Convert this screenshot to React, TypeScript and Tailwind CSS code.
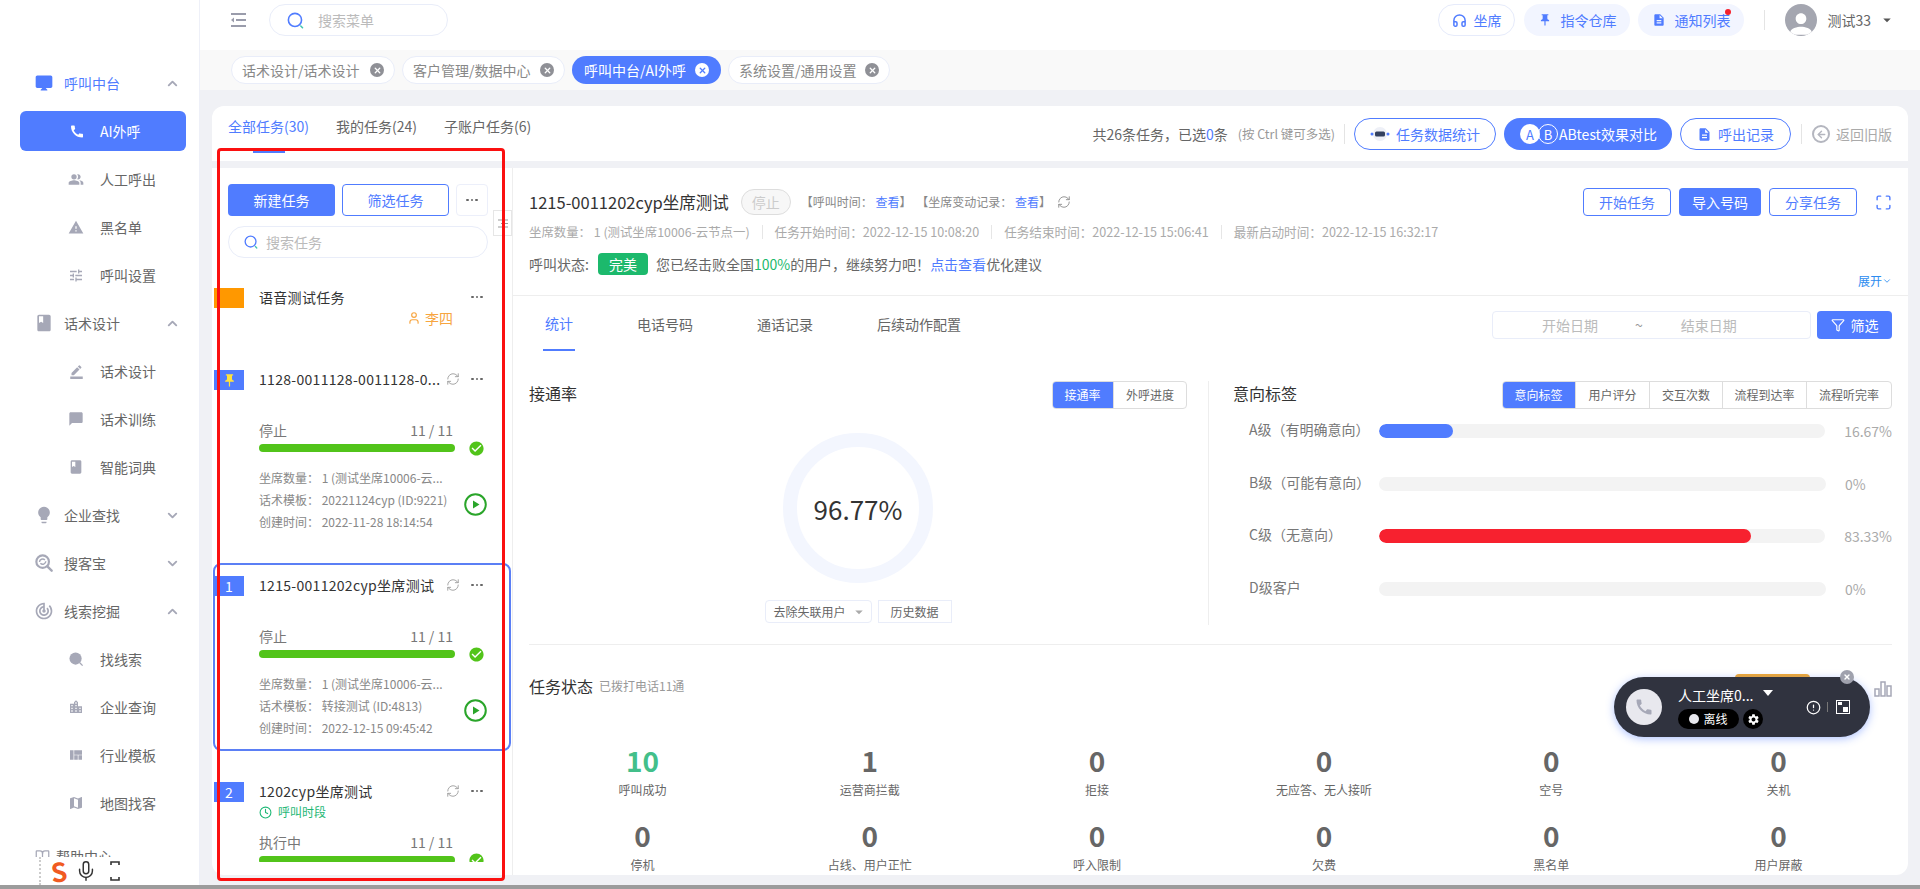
import {
  BookOpen,
  ChevronDown,
  ChevronUp,
  Clock,
  Filter,
  Headphones,
  Mic,
  RefreshCw,
  User,
  X,
  AlertCircle,
  Maximize,
  ArrowLeft,
} from "lucide-react";
import type { ReactNode } from "react";
import {
  MdBook,
  MdBorderColor,
  MdCall,
  MdChatBubble,
  MdCheckCircle,
  MdDesktopMac,
  MdDescription,
  MdLightbulb,
  MdLocationCity,
  MdMap,
  MdPeopleAlt,
  MdPushPin,
  MdSettings,
  MdTrackChanges,
  MdTune,
  MdViewQuilt,
  MdWarning,
  MdPerson,
  MdArrowDropDown,
} from "react-icons/md";

type NavRow = {
  label: string;
  icon: ReactNode;
  sub?: boolean;
  open?: boolean;
  active?: boolean;
  blue?: boolean;
};

function SolidSearch({ size }: { size: number }) {
  return (
    <svg width={size} height={size} viewBox="0 0 16 16" fill="currentColor">
      <circle cx="7" cy="7" r="6.5" />
      <path d="M12 11l3 3-1 1-3-3z" />
    </svg>
  );
}

function RoundSearch({ size }: { size: number }) {
  return (
    <svg width={size} height={size} viewBox="0 0 20 20" fill="none" stroke="currentColor">
      <circle cx="8.5" cy="8.5" r="7" strokeWidth="2.4" />
      <path d="M14 14l4.5 4.5" strokeWidth="2.6" strokeLinecap="round" />
      <path d="M5 9a3.5 3.5 0 0 1 6-2.4M12 8a3.5 3.5 0 0 1-6 2.4" strokeWidth="1.6" />
    </svg>
  );
}

const navRows: NavRow[] = [
  { label: "呼叫中台", icon: <MdDesktopMac size={20} />, open: true, blue: true },
  { label: "AI外呼", icon: <MdCall size={17} />, sub: true, active: true },
  { label: "人工呼出", icon: <MdPeopleAlt size={17} />, sub: true },
  { label: "黑名单", icon: <MdWarning size={17} />, sub: true },
  { label: "呼叫设置", icon: <MdTune size={17} />, sub: true },
  { label: "话术设计", icon: <MdBook size={20} />, open: true },
  { label: "话术设计", icon: <MdBorderColor size={15} />, sub: true },
  { label: "话术训练", icon: <MdChatBubble size={16} />, sub: true },
  { label: "智能词典", icon: <MdBook size={16} />, sub: true },
  { label: "企业查找", icon: <MdLightbulb size={22} />, open: false },
  { label: "搜客宝", icon: <RoundSearch size={18} />, open: false },
  { label: "线索挖掘", icon: <MdTrackChanges size={20} />, open: true },
  { label: "找线索", icon: <SolidSearch size={15} />, sub: true },
  { label: "企业查询", icon: <MdLocationCity size={16} />, sub: true },
  { label: "行业模板", icon: <MdViewQuilt size={16} />, sub: true },
  { label: "地图找客", icon: <MdMap size={16} />, sub: true },
];

function Sidebar() {
  return (
    <aside className="w-[200px] h-full shrink-0 bg-white pt-[59px] overflow-hidden border-r border-[#eef0f8]">
      {navRows.map((r, i) => (
        <div key={i} className="h-12 flex items-center">
          {r.active ? (
            <div className="ml-5 w-[166px] h-10 rounded-md bg-[#507cff] text-white flex items-center text-sm">
              <span className="ml-[49px] w-4 flex justify-center">{r.icon}</span>
              <span className="ml-[15px]">{r.label}</span>
            </div>
          ) : r.sub ? (
            <div className="flex items-center text-sm text-[#666666]">
              <span className="ml-[68px] w-4 flex justify-center text-[#a6a8b7]">{r.icon}</span>
              <span className="ml-4">{r.label}</span>
            </div>
          ) : (
            <div className={r.blue ? "flex items-center text-sm text-[#507cff] w-full" : "flex items-center text-sm text-[#666666] w-full"}>
              <span className={r.blue ? "ml-[34px] w-5 flex justify-center text-[#507cff]" : "ml-[34px] w-5 flex justify-center text-[#a6a8b7]"}>
                {r.icon}
              </span>
              <span className="ml-2.5">{r.label}</span>
              <span className="ml-auto mr-[19px] text-[#a6a8b7]">
                {r.open ? <ChevronUp size={15} strokeWidth={3} /> : <ChevronDown size={15} strokeWidth={3} />}
              </span>
            </div>
          )}
        </div>
      ))}
      <div className="flex items-center h-12 pt-2.5 text-sm text-[#666666]">
        <BookOpen size={15} className="ml-[35px] text-[#a6a8b7]" />
        <span className="ml-1.5">帮助中心</span>
      </div>
    </aside>
  );
}

function SearchGlyph({ size }: { size: number }) {
  return (
    <svg width={size} height={size} viewBox="0 0 16 16" fill="none" className="shrink-0">
      <circle cx="7.5" cy="7.5" r="6.2" stroke="#507cff" strokeWidth="1.5" />
      <path d="M13 13.2l1.6 1.6" stroke="#46c6b0" strokeWidth="1.5" strokeLinecap="round" />
    </svg>
  );
}

function Header() {
  return (
    <header className="h-[50px] shrink-0 bg-white flex items-start pt-1">
      <svg width="16" height="14" viewBox="0 0 16 14" fill="none" className="ml-[30px] mt-[9px]">
        <path d="M1 1h15M6 7h10M1 13h15" stroke="#9a9cab" strokeWidth="1.8" />
        <path d="M4 4.5L1 7l3 2.5z" fill="#9a9cab" />
      </svg>
      <div className="ml-[23px] w-[179px] h-8 rounded-full border border-[#e9edf9] flex items-center pl-[17px]">
        <SearchGlyph size={17} />
        <span className="ml-3.5 text-sm text-[#bbbbbb]">搜索菜单</span>
      </div>
      <div className="ml-auto flex items-center text-sm text-[#507cff]">
        <div className="w-[77px] h-8 rounded-full border border-[#e6ebfb] flex items-center justify-center gap-1.5">
          <Headphones size={15} strokeWidth={2.4} />
          <span>坐席</span>
        </div>
        <div className="ml-[9px] w-[106px] h-8 rounded-full bg-[#f2f5ff] flex items-center justify-center gap-2">
          <MdPushPin size={14} />
          <span>指令仓库</span>
        </div>
        <div className="relative ml-2 w-[106px] h-8 rounded-full bg-[#f2f5ff] flex items-center justify-center gap-2">
          <MdDescription size={14} />
          <span>通知列表</span>
          <span className="absolute right-[13px] top-[5px] w-[6px] h-[6px] rounded-full bg-[#f5222d]" />
        </div>
        <div className="ml-5 w-px h-5 bg-[#e4e4e4]" />
        <div className="ml-5 w-8 h-8 rounded-full bg-[#a4a6b0] overflow-hidden flex items-end justify-center">
          <MdPerson size={32} className="text-white -mb-1" />
        </div>
        <span className="ml-2.5 text-[#666666]">测试33</span>
        <MdArrowDropDown size={18} className="ml-[7px] mr-[24px] text-[#555555]" />
      </div>
    </header>
  );
}

const tabs = [
  { label: "话术设计/话术设计", width: "w-[164px]" },
  { label: "客户管理/数据中心", width: "w-[163px]" },
  { label: "呼叫中台/AI外呼", width: "w-[149px]", active: true },
  { label: "系统设置/通用设置", width: "w-[162px]" },
];

function TabBar() {
  return (
    <div className="h-10 shrink-0 bg-[#f9f9f9] flex items-center pl-[31px] gap-[7px]">
      {tabs.map((t) => (
        <div
          key={t.label}
          className={
            t.active
              ? `${t.width} h-7 rounded-full bg-[#507cff] text-white text-sm flex items-center justify-between px-3`
              : `${t.width} h-7 rounded-full border border-[#e9edf9] bg-white text-[#888888] text-sm flex items-center justify-between px-2.5`
          }
        >
          <span>{t.label}</span>
          <span
            className={
              t.active
                ? "w-[14px] h-[14px] rounded-full bg-white text-[#507cff] flex items-center justify-center"
                : "w-[14px] h-[14px] rounded-full bg-[#8f9096] text-white flex items-center justify-center"
            }
          >
            <X size={9} strokeWidth={3.5} />
          </span>
        </div>
      ))}
    </div>
  );
}

function TopCard() {
  return (
    <div className="h-[55px] shrink-0 bg-white rounded-t-xl flex">
      <div className="flex items-start gap-[27px] pl-4 pt-2.5 text-sm text-[#666666]">
        <div>
          <div className="leading-5 text-[#507cff]">全部任务(30)</div>
          <div className="w-8 h-0.5 mt-[15px] mx-auto bg-[#507cff]" />
        </div>
        <div className="leading-5">我的任务(24)</div>
        <div className="leading-5">子账户任务(6)</div>
      </div>
      <div className="ml-auto mr-4 mt-3 h-8 flex items-center text-sm">
        <span className="text-[#666666]">
          共26条任务，已选<span className="text-[#507cff]">0</span>条
        </span>
        <span className="ml-2.5 text-[12.5px] text-[#999999]">(按 Ctrl 键可多选)</span>
        <div className="ml-[9px] w-px h-5 bg-[#e4e4e4]" />
        <div className="ml-[9px] w-[142px] h-8 rounded-full border border-[#507cff] text-[#507cff] flex items-center justify-center gap-1.5">
          <svg width="20" height="14" viewBox="0 0 20 14">
            <circle cx="10" cy="7" r="7" fill="#eef0f7" />
            <rect x="5" y="4.5" width="10" height="5" rx="1.5" fill="#33415f" />
            <circle cx="2" cy="7" r="1.5" fill="#507cff" />
            <circle cx="18" cy="7" r="1.5" fill="#507cff" />
          </svg>
          <span>任务数据统计</span>
        </div>
        <div className="ml-2 w-[168px] h-8 rounded-full bg-[#507cff] text-white flex items-center pl-4">
          <span className="w-5 h-5 rounded-full bg-white text-[#507cff] flex items-center justify-center text-[13px] leading-none">A</span>
          <span className="-ml-0.5 w-5 h-5 rounded-full border border-white flex items-center justify-center text-[13px] leading-none">B</span>
          <span className="ml-px">ABtest效果对比</span>
        </div>
        <div className="ml-2 w-[111px] h-8 rounded-full border border-[#507cff] text-[#507cff] flex items-center justify-center gap-1.5">
          <MdDescription size={15} />
          <span>呼出记录</span>
        </div>
        <div className="ml-2.5 w-px h-5 bg-[#e4e4e4]" />
        <span className="ml-2.5 w-[18px] h-[18px] rounded-full border-2 border-[#b4b6bf] flex items-center justify-center text-[#b4b6bf]">
          <ArrowLeft size={11} strokeWidth={3} />
        </span>
        <span className="ml-1.5 text-[#aaaaaa]">返回旧版</span>
      </div>
    </div>
  );
}

function Dots() {
  return (
    <span className="flex gap-[2px] items-center">
      <span className="w-[2.5px] h-[2.5px] rounded-full bg-[#666666]" />
      <span className="w-[2.5px] h-[2.5px] rounded-full bg-[#666666]" />
      <span className="w-[2.5px] h-[2.5px] rounded-full bg-[#666666]" />
    </span>
  );
}

type Task = {
  tag: string;
  tagColor: "orange" | "blue";
  pin?: boolean;
  title: string;
  owner?: string;
  slot?: string;
  status?: string;
  seats?: string;
  script?: string;
  created?: string;
  selected?: boolean;
};

const tasks: Task[] = [
  { tag: "", tagColor: "orange", title: "语音测试任务", owner: "李四" },
  {
    tag: "",
    tagColor: "blue",
    pin: true,
    title: "1128-0011128-0011128-0...",
    status: "停止",
    seats: "1 (测试坐席10006-云...",
    script: "20221124cyp (ID:9221)",
    created: "2022-11-28 18:14:54",
  },
  {
    tag: "1",
    tagColor: "blue",
    selected: true,
    title: "1215-0011202cyp坐席测试",
    status: "停止",
    seats: "1 (测试坐席10006-云...",
    script: "转接测试 (ID:4813)",
    created: "2022-12-15 09:45:42",
  },
  {
    tag: "2",
    tagColor: "blue",
    title: "1202cyp坐席测试",
    slot: "呼叫时段",
    status: "执行中",
    seats: "1 (测试坐席10006-云...",
    script: "转接测试 (ID:4813)",
    created: "2022-12-15 09:45:42",
  },
];

function TaskItem({ t }: { t: Task }) {
  return (
    <div
      className={
        t.selected
          ? "ml-px w-[298px] border-2 border-[#5b7ff5] rounded-lg flex shrink-0"
          : "ml-px w-[298px] border-2 border-transparent rounded-lg flex shrink-0"
      }
    >
      <div
        className={
          t.tagColor === "orange"
            ? "-ml-px mt-[11px] w-[30px] h-5 shrink-0 bg-[#ff9800] text-white flex items-center justify-center"
            : "-ml-px mt-[11px] w-[30px] h-5 shrink-0 bg-[#507cff] text-white text-sm flex items-center justify-center"
        }
      >
        {t.pin ? <MdPushPin size={15} className="text-[#ffe23d]" /> : t.tag}
      </div>
      <div className={t.status ? "ml-[15px] w-[231px] h-[184px] pt-2.5" : "ml-[15px] w-[231px] h-[60px] pt-2.5"}>
        <div className="h-5 flex items-center text-sm text-[#333333]">
          <span className="w-[186px] shrink-0 whitespace-nowrap tracking-[0.3px]">{t.title}</span>
          {t.status ? <RefreshCw size={14} strokeWidth={1.5} className="ml-px shrink-0 text-[#999999]" /> : <span className="w-[15px] shrink-0" />}
          <span className="ml-[11px]">
            <Dots />
          </span>
        </div>
        <div className="h-[22px] flex items-center text-xs">
          {t.owner ? (
            <div className="ml-auto mr-[37px] flex items-center text-[#f7a540] text-sm">
              <User size={14} />
              <span className="ml-1">{t.owner}</span>
            </div>
          ) : null}
          {t.slot ? (
            <div className="flex items-center text-[#1fb876]">
              <Clock size={13} />
              <span className="ml-1.5">{t.slot}</span>
            </div>
          ) : null}
        </div>
        {t.status ? (
          <>
            <div className="mt-[9px] w-[194px] h-5 flex justify-between items-center text-sm text-[#777777]">
              <span>{t.status}</span>
              <span>11 / 11</span>
            </div>
            <div className="mt-0.5 flex items-center h-3">
              <div className="w-[196px] h-2 rounded-full bg-[#52c41a]" />
              <MdCheckCircle size={17} className="ml-[13px] text-[#52c41a]" />
            </div>
            <div className="mt-[13px] flex items-center">
              <div className="w-[204px] text-xs leading-[22px] text-[#888888] whitespace-nowrap">
                <div>坐席数量： {t.seats}</div>
                <div>话术模板： {t.script}</div>
                <div>创建时间： {t.created}</div>
              </div>
              <svg width="23" height="23" viewBox="0 0 23 23" className="shrink-0 ml-px mt-2">
                <circle cx="11.5" cy="11.5" r="10.3" fill="none" stroke="#2aa52a" strokeWidth="2" />
                <path d="M9 7.5l6.5 4-6.5 4z" fill="#2aa52a" />
              </svg>
            </div>
          </>
        ) : null}
      </div>
    </div>
  );
}

function TaskPanel() {
  return (
    <div className="relative w-[300px] shrink-0 h-full bg-white rounded-bl-xl">
      <div className="pt-4 pl-4 flex gap-[7px] text-sm">
        <button className="w-[107px] h-8 rounded bg-[#507cff] text-white">新建任务</button>
        <button className="w-[107px] h-8 rounded border border-[#507cff] text-[#507cff]">筛选任务</button>
        <div className="w-8 h-8 rounded border border-[#eceffa] flex items-center justify-center">
          <Dots />
        </div>
      </div>
      <div className="mt-2.5 ml-4 w-[260px] h-8 rounded-full border border-[#e9edf9] flex items-center pl-[15px]">
        <SearchGlyph size={14} />
        <span className="ml-2 text-sm text-[#bbbbbb]">搜索任务</span>
      </div>
      <div className="absolute left-[281px] top-[42px] w-[19px] h-[26px] border border-[#e6e6e6] bg-white flex items-center justify-center">
        <svg width="10" height="9" viewBox="0 0 10 9" fill="none">
          <path d="M0 1h10M3 4.5h7M0 8h10" stroke="#999999" />
        </svg>
      </div>
      <div className="mt-[17px] h-[587px] overflow-hidden flex flex-col gap-[18px]">
        {tasks.map((t) => (
          <TaskItem key={t.title} t={t} />
        ))}
      </div>
    </div>
  );
}

function Toggle({ items, widths }: { items: string[]; widths: string[] }) {
  return (
    <div className="h-7 flex rounded border border-[#dddddd] text-xs text-[#666666] overflow-hidden">
      {items.map((it, i) => (
        <div
          key={it}
          className={
            i === 0
              ? `${widths[i]} -my-px -ml-px bg-[#507cff] text-white flex items-center justify-center`
              : `${widths[i]} border-l border-[#dddddd] first:border-l-0 flex items-center justify-center`
          }
        >
          {it}
        </div>
      ))}
    </div>
  );
}

const intentRows = [
  { label: "A级（有明确意向）", pct: "16.67%", fill: "w-[74px] bg-[#507cff]" },
  { label: "B级（可能有意向）", pct: "0%", fill: "w-0" },
  { label: "C级（无意向）", pct: "83.33%", fill: "w-[372px] bg-[#f7212f]" },
  { label: "D级客户", pct: "0%", fill: "w-0" },
];

const stats = [
  { n: "10", label: "呼叫成功", green: true },
  { n: "1", label: "运营商拦截" },
  { n: "0", label: "拒接" },
  { n: "0", label: "无应答、无人接听" },
  { n: "0", label: "空号" },
  { n: "0", label: "关机" },
  { n: "0", label: "停机" },
  { n: "0", label: "占线、用户正忙" },
  { n: "0", label: "呼入限制" },
  { n: "0", label: "欠费" },
  { n: "0", label: "黑名单" },
  { n: "0", label: "用户屏蔽" },
];

function Stats() {
  return (
    <div className="mt-10 grid grid-cols-6 gap-y-[19px] text-center">
      {stats.map((s, i) => (
        <div key={i}>
          <div className={s.green ? "h-9 leading-8 text-[28px] font-bold text-[#43bf8a]" : "h-9 leading-8 text-[28px] font-bold text-[#666666]"}>
            {s.n}
          </div>
          <div className="h-5 leading-5 text-xs text-[#666666]">{s.label}</div>
        </div>
      ))}
    </div>
  );
}

function DetailPanel() {
  return (
    <div className="flex-1 min-w-0 h-full bg-white border-l border-[#eeeeee] rounded-br-xl overflow-hidden">
      <div className="h-[128px] px-4 pt-5 border-b border-[#eeeeee] flex flex-col">
        <div className="h-7 flex items-center">
          <span className="text-[16.5px] text-[#333333]">1215-0011202cyp坐席测试</span>
          <span className="ml-[12px] w-[50px] h-[26px] rounded-full border border-[#dddddd] bg-[#f7f7f7] text-[#cccccc] text-sm flex items-center justify-center">
            停止
          </span>
          <span className="ml-2.5 text-xs text-[#888888]">
            【呼叫时间： <span className="text-[#507cff]">查看</span>】 <span className="ml-0.5">【坐席变动记录： </span><span className="text-[#507cff]">查看</span>】
          </span>
          <RefreshCw size={14} strokeWidth={1.5} className="ml-1.5 text-[#888888]" />
          <div className="ml-auto flex items-center gap-2 text-sm">
            <button className="w-[88px] h-7 rounded border border-[#507cff] text-[#507cff]">开始任务</button>
            <button className="w-[82px] h-7 rounded bg-[#507cff] text-white">导入号码</button>
            <button className="w-[88px] h-7 rounded border border-[#507cff] text-[#507cff]">分享任务</button>
            <Maximize size={17} className="ml-2.5 text-[#507cff]" />
          </div>
        </div>
        <div className="mt-2 h-4 flex items-center text-[12.6px] text-[#aaaaaa] whitespace-nowrap">
          <span className="text-[12.4px]">坐席数量： 1 (测试坐席10006-云节点一)</span>
          <span className="mx-3 w-px h-3.5 bg-[#e6e6e6]" />
          <span>任务开始时间：2022-12-15 10:08:20</span>
          <span className="mx-3 w-px h-3.5 bg-[#e6e6e6]" />
          <span>任务结束时间：2022-12-15 15:06:41</span>
          <span className="mx-3 w-px h-3.5 bg-[#e6e6e6]" />
          <span>最新启动时间：2022-12-15 16:32:17</span>
        </div>
        <div className="mt-[13px] h-[22px] flex items-center text-sm text-[#666666]">
          <span>呼叫状态:</span>
          <span className="ml-[9px] w-[50px] h-[22px] bg-[#1cb96c] text-white rounded-sm flex items-center justify-center">完美</span>
          <span className="ml-2">
            您已经击败全国<span className="text-[#1cb96c]">100%</span>的用户，继续努力吧！<span className="text-[#507cff]">点击查看</span>优化建议
          </span>
        </div>
        <div className="-mt-0.5 h-4 self-end flex items-center text-xs text-[#2d8cf0]">
          展开
          <ChevronDown size={10} />
        </div>
      </div>

      <div className="h-14 px-4 flex items-start">
        <div className="ml-3.5 flex gap-[60px] text-sm text-[#666666]">
          <div className="px-0.5 h-[55px] flex items-center border-b-2 border-[#507cff] text-[#507cff]">统计</div>
          <div className="px-0.5 h-[55px] flex items-center">电话号码</div>
          <div className="px-0.5 h-[55px] flex items-center">通话记录</div>
          <div className="px-0.5 h-[55px] flex items-center">后续动作配置</div>
        </div>
        <div className="ml-auto mt-[15px] flex gap-1.5 text-sm">
          <div className="w-[319px] h-7 rounded border border-[#e9edf9] text-[#bbbbbb] flex items-center pl-[49px]">
            <span>开始日期</span>
            <span className="ml-[37px] text-[#999999]">~</span>
            <span className="ml-[38px]">结束日期</span>
          </div>
          <button className="w-[75px] h-7 rounded bg-[#507cff] text-white flex items-center justify-center gap-1.5">
            <Filter size={14} />
            筛选
          </button>
        </div>
      </div>

      <div className="mx-4 h-[293px] pt-[29px] border-b border-[#eeeeee] flex items-start">
        <div className="w-[658px] shrink-0">
          <div className="flex justify-between items-start">
            <span className="text-base leading-6 text-[#333333]">接通率</span>
            <Toggle items={["接通率", "外呼进度"]} widths={["w-[61px]", "w-[73px]"]} />
          </div>
          <div className="mt-6 mx-auto w-[150px] h-[150px] rounded-full border-[14px] border-[#f3f6fe] flex items-center justify-center text-[26px] text-[#333333]">
            96.77%
          </div>
          <div className="mt-[17px] flex justify-center gap-1.5 text-xs text-[#666666]">
            <div className="w-[107px] h-[23px] rounded border border-[#e9edf9] flex items-center pl-2">
              去除失联用户
              <MdArrowDropDown size={18} className="ml-1 text-[#aaaaaa]" />
            </div>
            <div className="w-[74px] h-[23px] border border-[#e9edf9] flex items-center justify-center">历史数据</div>
          </div>
        </div>
        <div className="ml-[21px] w-px h-[244px] bg-[#eeeeee] shrink-0" />
        <div className="ml-6 flex-1 min-w-0">
          <div className="flex justify-between items-start">
            <span className="text-base leading-6 text-[#333333]">意向标签</span>
            <Toggle
              items={["意向标签", "用户评分", "交互次数", "流程到达率", "流程听完率"]}
              widths={["w-[73px]", "w-[74px]", "w-[73px]", "w-[84px]", "w-[85px]"]}
            />
          </div>
          <div className="-mt-1">
            {intentRows.map((r) => (
              <div key={r.label} className="h-[52.5px] flex items-center pl-4">
                <span className="w-[130px] shrink-0 text-sm text-[#777777] -mt-1">{r.label}</span>
                <div className="w-[447px] h-3.5 rounded-full bg-[#f3f3f3] overflow-hidden">
                  <div className={`${r.fill} h-full rounded-full`} />
                </div>
                <span className="ml-[19px] text-sm text-[#aaaaaa] whitespace-nowrap">{r.pct}</span>
              </div>
            ))}
          </div>
        </div>
      </div>

      <div className="mx-4 mt-[29px]">
        <div className="h-[30px] flex items-start">
          <span className="text-base leading-6 text-[#333333]">任务状态</span>
          <span className="ml-1.5 text-xs leading-6 text-[#999999]">已拨打电话11通</span>
          <div className="ml-auto w-[75px] h-[30px] rounded-t bg-[#f0a830]" />
          <svg width="18" height="16" viewBox="0 0 18 16" fill="none" className="ml-[64px] mt-[7px]">
            <path d="M1 8h4v7H1zM7 1h4v14H7zM13 5h4v10h-4z" stroke="#a6a8b7" strokeWidth="1.5" />
          </svg>
        </div>
        <Stats />
      </div>
    </div>
  );
}

function PhoneWidget() {
  return (
    <div className="absolute left-[1614px] top-[677px] w-[256px] h-[60px] rounded-full bg-[#30333f] shadow-[0_2px_8px_rgba(80,124,255,0.45)] flex items-center text-white">
      <span className="ml-3 w-9 h-9 rounded-full bg-[#e8e8ee] flex items-center justify-center text-[#a6a8b7]">
        <MdCall size={20} />
      </span>
      <div className="ml-4">
        <div className="flex items-center h-5 text-sm">
          人工坐席0...
          <span className="ml-[10px] w-0 h-0 border-x-[5px] border-x-transparent border-t-[6px] border-t-white -mt-1" />
        </div>
        <div className="mt-1 flex gap-1">
          <div className="w-[61px] h-5 rounded-full bg-black text-xs flex items-center justify-center gap-1">
            <span className="w-[10px] h-[10px] rounded-full bg-[#e8e8ee]" />
            离线
          </div>
          <div className="w-5 h-5 rounded-full bg-black flex items-center justify-center">
            <MdSettings size={13} />
          </div>
        </div>
      </div>
      <AlertCircle size={15} className="ml-[33px]" />
      <span className="ml-1.5 w-px h-2.5 bg-[#777777]" />
      <svg width="14" height="14" viewBox="0 0 14 14" className="ml-2">
        <path d="M0 0h14v14H0z" fill="none" stroke="#ffffff" strokeWidth="2" />
        <path d="M7 7h5v5H7zM2 2h4v3H2z" fill="#ffffff" />
      </svg>
      <span className="absolute right-[16px] -top-[7px] w-[14px] h-[14px] rounded-full bg-[#9fa1ad] flex items-center justify-center">
        <X size={8} strokeWidth={4} />
      </span>
    </div>
  );
}

function ImeBar() {
  return (
    <div className="absolute left-[35px] top-[857px] w-[87px] h-[28px] bg-white flex items-center">
      <span className="ml-1 h-full border-l-2 border-dotted border-[#cccccc]" />
      <span className="ml-2 w-5 h-5 text-[#f05a22] font-bold text-[26px] leading-none flex items-center justify-center -rotate-6">S</span>
      <Mic size={22} strokeWidth={1.6} className="ml-1.5 text-[#333333]" />
      <svg width="10" height="20" viewBox="0 0 10 20" fill="none" className="ml-[13px]">
        <path d="M1 4V1h8v3M1 16v3h8v-3" stroke="#333333" strokeWidth="1.6" />
      </svg>
    </div>
  );
}

export default function App() {
  return (
    <div className="relative w-[1920px] h-[889px] overflow-hidden bg-[#9c9c9c] font-['Noto_Sans_CJK_SC',sans-serif]">
      <div className="h-[885px] flex bg-[#f0f1f5]">
        <Sidebar />
        <div className="flex-1 min-w-0 flex flex-col">
          <Header />
          <TabBar />
          <div className="flex-1 min-h-0 pl-3 pr-3 pt-4 pb-2.5 flex flex-col">
            <TopCard />
            <div className="mt-[7px] flex-1 min-h-0 flex">
              <TaskPanel />
              <DetailPanel />
            </div>
          </div>
        </div>
      </div>
      <PhoneWidget />
      <ImeBar />
      {/* red review frame drawn on top of the task list */}
      <div className="absolute left-[217px] top-[148px] w-[288px] h-[733px] border-[3px] border-[#fb1010] rounded-sm pointer-events-none" />
    </div>
  );
}
